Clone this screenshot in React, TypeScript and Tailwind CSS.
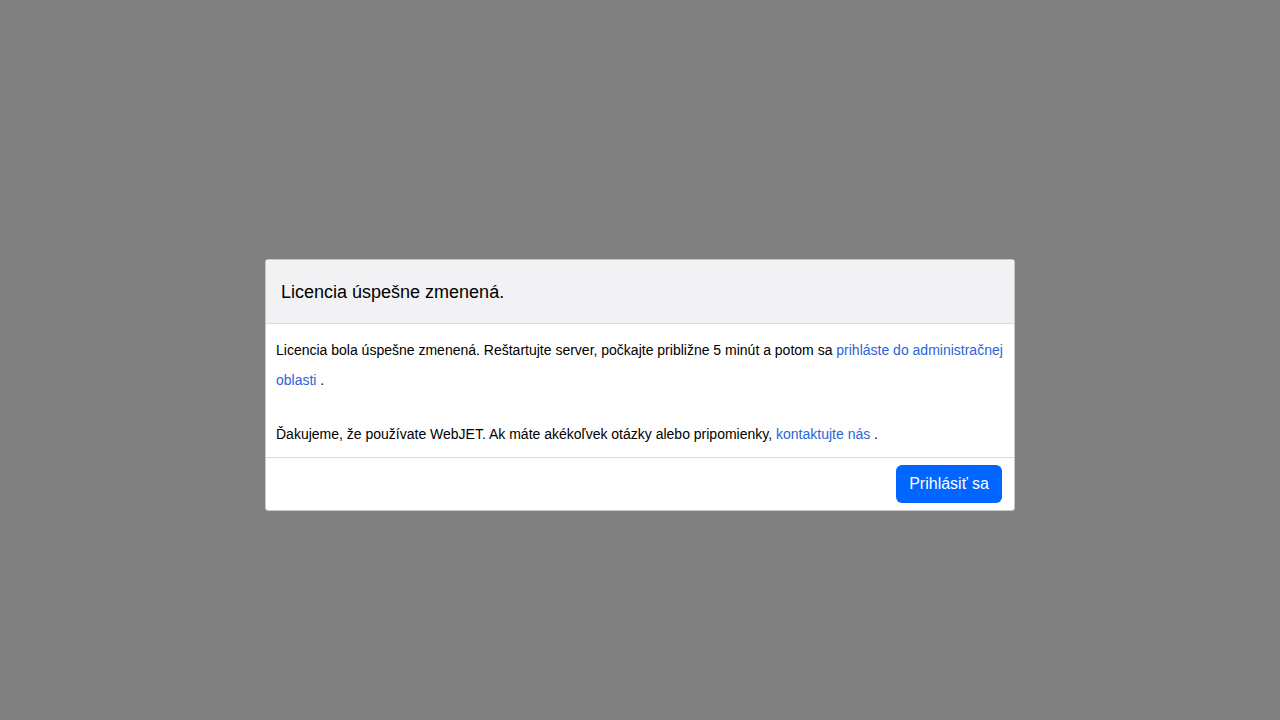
import React from "react";

export default function App() {
  return (
    <div className="w-[1280px] h-[720px] bg-[#808080] flex items-center justify-center" style={{ fontFamily: '"Liberation Sans", Arial, sans-serif' }}>
      <div className="w-[750px] mt-[49px] bg-white border border-[#c8c8c8] rounded-[3px] overflow-hidden">
        <div className="h-[64px] bg-[#f2f2f4] border-b border-[#dcdcdc] flex items-center px-[15px] pt-[2px]">
          <h1 className="text-[18px] text-black">Licencia úspešne zmenená.</h1>
        </div>
        <div className="px-[10px] pt-[11px] pb-[8px] text-[14px] leading-[30px] text-black">
          <p>
            Licencia bola úspešne zmenená. Reštartujte server, počkajte približne 5 minút a potom sa{" "}
            <a className="text-[#2c64d8]">prihláste do administračnej oblasti</a> .
          </p>
          <p className="mt-[24px]">
            Ďakujeme, že používate WebJET. Ak máte akékoľvek otázky alebo pripomienky,{" "}
            <a className="text-[#2c64d8]">kontaktujte nás</a> .
          </p>
        </div>
        <div className="border-t border-[#dcdcdc] h-[53px] flex items-center justify-end px-[12px]">
          <button className="h-[38px] px-[13px] bg-[#0066ff] text-white text-[16px] rounded-[6px]">Prihlásiť sa</button>
        </div>
      </div>
    </div>
  );
}
